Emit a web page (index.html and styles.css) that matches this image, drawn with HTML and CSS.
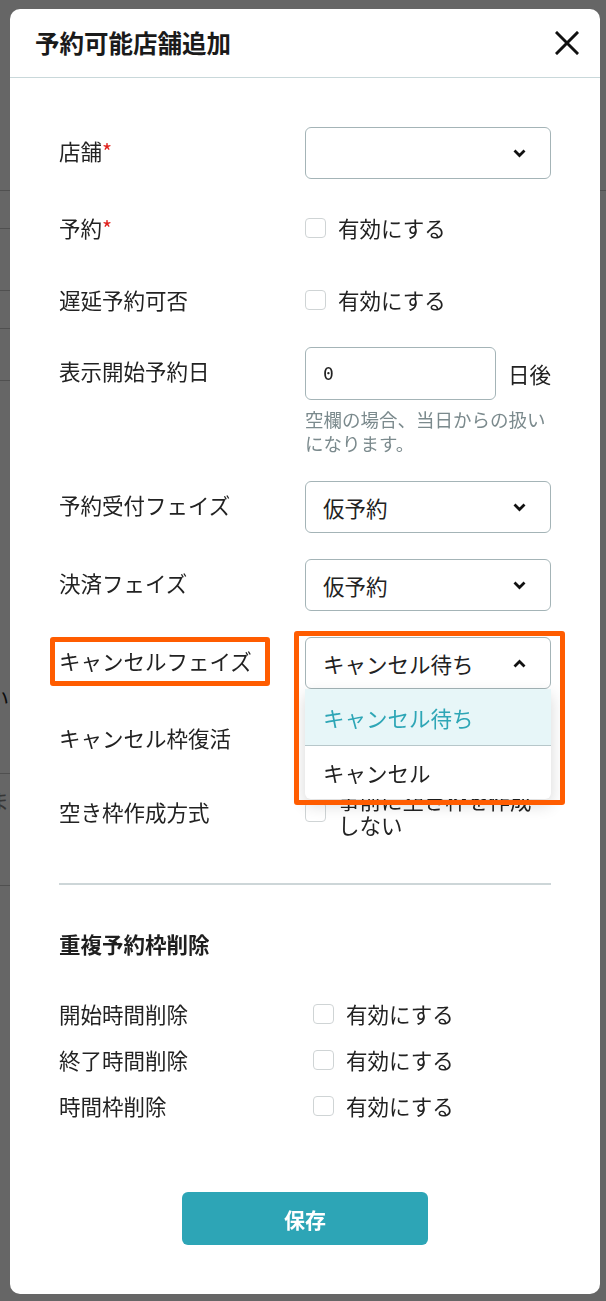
FILE: index.html
```html
<!DOCTYPE html>
<html lang="ja">
<head>
<meta charset="utf-8">
<title>予約可能店舗追加</title>
<link rel="stylesheet" href="styles.css">
</head>
<body>
<div class="bg-page">
  <div class="bg-row bg-row--r1"></div>
  <div class="bg-row bg-row--r2"></div>
  <div class="bg-row bg-row--r3"></div>
  <div class="bg-row bg-row--r4"></div>
  <div class="bg-row bg-row--r5"></div>
  <div class="bg-row bg-row--r6"><span class="bg-clip">ない</span></div>
  <div class="bg-row bg-row--r7"><span class="bg-clip bg-clip--muted">ま</span></div>
</div>

<div class="overlay">
  <div class="modal">
    <header class="modal-header">
      <h1 class="modal-title">予約可能店舗追加</h1>
      <button class="close-btn" type="button" aria-label="閉じる">
        <svg width="24" height="24" viewBox="0 0 24 24"><path d="M2 2 L22 22 M22 2 L2 22" stroke="#111" stroke-width="3" fill="none" stroke-linecap="square"/></svg>
      </button>
    </header>

    <div class="modal-body">
      <div class="field field--select">
        <div class="field-label">店舗<span class="req">*</span></div>
        <div class="select">
          <span class="select-value"></span>
          <svg class="chev" width="13" height="9" viewBox="0 0 13 9"><path d="M1.5 1.5 L6.5 6.5 L11.5 1.5" stroke="#111" stroke-width="2.8" fill="none"/></svg>
        </div>
      </div>

      <div class="field field--check">
        <div class="field-label">予約<span class="req">*</span></div>
        <label class="check"><span class="checkbox"></span><span>有効にする</span></label>
      </div>

      <div class="field field--check">
        <div class="field-label">遅延予約可否</div>
        <label class="check"><span class="checkbox"></span><span>有効にする</span></label>
      </div>

      <div class="field field--date">
        <div class="field-label field-label--date">表示開始予約日</div>
        <div class="date-control">
          <div class="date-row">
            <div class="text-input">0</div>
            <span class="unit">日後</span>
          </div>
          <p class="help">空欄の場合、当日からの扱いになります。</p>
        </div>
      </div>

      <div class="field field--select">
        <div class="field-label">予約受付フェイズ</div>
        <div class="select">
          <span class="select-value">仮予約</span>
          <svg class="chev" width="13" height="9" viewBox="0 0 13 9"><path d="M1.5 1.5 L6.5 6.5 L11.5 1.5" stroke="#111" stroke-width="2.8" fill="none"/></svg>
        </div>
      </div>

      <div class="field field--select">
        <div class="field-label">決済フェイズ</div>
        <div class="select">
          <span class="select-value">仮予約</span>
          <svg class="chev" width="13" height="9" viewBox="0 0 13 9"><path d="M1.5 1.5 L6.5 6.5 L11.5 1.5" stroke="#111" stroke-width="2.8" fill="none"/></svg>
        </div>
      </div>

      <div class="field field--select field--focus">
        <div class="field-label field-label--marked">キャンセルフェイズ<span class="anno anno--label"></span></div>
        <div class="select select--open">
          <span class="select-value">キャンセル待ち</span>
          <svg class="chev" width="13" height="9" viewBox="0 0 13 9"><path d="M1.5 7.5 L6.5 2.5 L11.5 7.5" stroke="#111" stroke-width="2.8" fill="none"/></svg>
          <ul class="dropdown">
            <li class="dropdown-item dropdown-item--active">キャンセル待ち</li>
            <li class="dropdown-item">キャンセル</li>
          </ul>
          <span class="anno anno--select"></span>
        </div>
      </div>

      <div class="field field--check">
        <div class="field-label">キャンセル枠復活</div>
        <label class="check"><span class="checkbox"></span><span>有効にする</span></label>
      </div>

      <div class="field field--check">
        <div class="field-label">空き枠作成方式</div>
        <label class="check"><span class="checkbox"></span><span class="check-text--wrap">事前に空き枠を作成しない</span></label>
      </div>

      <hr class="divider">

      <h2 class="section-title">重複予約枠削除</h2>

      <div class="opt-list">
        <div class="opt-row">
          <div class="field-label">開始時間削除</div>
          <label class="check"><span class="checkbox"></span><span>有効にする</span></label>
        </div>
        <div class="opt-row">
          <div class="field-label">終了時間削除</div>
          <label class="check"><span class="checkbox"></span><span>有効にする</span></label>
        </div>
        <div class="opt-row">
          <div class="field-label">時間枠削除</div>
          <label class="check"><span class="checkbox"></span><span>有効にする</span></label>
        </div>
      </div>

      <button class="save-btn" type="button">保存</button>
    </div>
  </div>
</div>
</body>
</html>
```

FILE: styles.css
```css
* { box-sizing: border-box; }

html, body { margin: 0; padding: 0; }

body {
  width: 606px;
  height: 1301px;
  overflow: hidden;
  background: #fff;
  color: #222;
  font-family: "Noto Sans CJK JP", "Noto Sans", sans-serif;
}

/* ---------- page behind the dialog ---------- */
.bg-page { width: 600px; }
.bg-row { border-bottom: 1px solid #c8c8c8; }
.bg-row--r1 { height: 191px; width: 606px; }
.bg-row--r2 { height: 38px; }
.bg-row--r3 { height: 62px; }
.bg-row--r4 { height: 38px; }
.bg-row--r5 { height: 52px; }
.bg-row--r6 { height: 393px; padding-top: 301px; }
.bg-row--r7 { height: 112px; padding-top: 11px; }
.bg-clip {
  display: block;
  margin-left: -33px;
  font-size: 21px;
  line-height: 30px;
  color: #222;
}
.bg-clip--muted { margin-left: -12px; color: #888; }

/* ---------- overlay + modal ---------- */
.overlay {
  position: fixed;
  inset: 0;
  background: rgba(0, 0, 0, 0.6);
  padding: 9px 6px 7px 10px;
}

.modal {
  height: 100%;
  background: #fff;
  border-radius: 10px;
  display: flex;
  flex-direction: column;
}

.modal-header {
  height: 69px;
  flex: none;
  border-bottom: 1px solid #c9d8da;
  display: flex;
  align-items: center;
  justify-content: space-between;
  padding: 0 21px 0 25px;
}

.modal-title {
  margin: 0;
  font-size: 24.5px;
  font-weight: 700;
  line-height: 1;
  color: #1a1a1a;
}

.close-btn {
  width: 24px;
  height: 24px;
  padding: 0;
  border: 0;
  background: none;
  display: flex;
}

.modal-body {
  flex: 1;
  padding: 49px 49px 49px;
  display: flex;
  flex-direction: column;
}

/* ---------- form rows ---------- */
.field {
  display: grid;
  grid-template-columns: 246px 246px;
  align-items: center;
  margin-bottom: 26px;
  position: relative;
}
.field--check { min-height: 46px; }
.field--date { align-items: start; margin-top: -2px; }
.field--select .field-label { padding-bottom: 4px; }

.field-label {
  font-size: 21.5px;
  line-height: 30px;
  color: #222;
}
.field-label--date { padding-top: 9px; }
.field--select .field-label--marked {
  position: relative;
  align-self: stretch;
  display: flex;
  align-items: center;
}

.req { color: #e0201c; }

.select {
  position: relative;
  height: 52px;
  border: 1px solid #a4b4b7;
  border-radius: 6px;
  background: #fff;
  display: flex;
  align-items: center;
  justify-content: space-between;
  padding: 0 24px 0 17px;
  font-size: 21.5px;
  color: #222;
}
.chev { flex: none; }

.check {
  display: flex;
  align-items: center;
  gap: 12px;
  font-size: 21.5px;
  line-height: 30px;
  color: #222;
}
.checkbox {
  flex: none;
  width: 21px;
  height: 20px;
  border: 1.5px solid #cfd4d5;
  border-radius: 4px;
  background: #fff;
}
.check-text--wrap {
  max-width: 202px;
  line-height: 25px;
}

.date-control { display: flex; flex-direction: column; }
.date-row {
  display: flex;
  align-items: center;
  gap: 12px;
  font-size: 21.5px;
}
.text-input {
  flex: 1;
  min-width: 0;
  height: 53px;
  border: 1px solid #a4b4b7;
  border-radius: 6px;
  padding: 0 17px;
  display: flex;
  align-items: center;
  font-family: "DejaVu Sans Mono", monospace;
  font-size: 18px;
  color: #222;
}
.unit { flex: none; white-space: nowrap; line-height: 30px; }
.help {
  margin: 7px 0 0;
  font-size: 18.5px;
  line-height: 24px;
  color: #7b8a8d;
}

/* ---------- open dropdown ---------- */
.dropdown {
  position: absolute;
  top: 100%;
  left: -1px;
  right: -1px;
  margin: 1px 0 0;
  padding: 0;
  list-style: none;
  background: #fff;
  border-radius: 0 0 6px 6px;
  box-shadow: 0 6px 16px rgba(0, 0, 0, 0.16);
  overflow: hidden;
  z-index: 2;
}
.dropdown-item {
  height: 53px;
  display: flex;
  align-items: center;
  padding-left: 18px;
  font-size: 21.5px;
  color: #222;
}
.dropdown-item--active {
  height: 57px;
  background: #e7f6f8;
  color: #2ea6b6;
  border-bottom: 1px solid #b7c7ca;
}

/* ---------- annotation boxes ---------- */
.anno {
  position: absolute;
  border: 5px solid #ff5c00;
  border-radius: 3px;
  pointer-events: none;
  z-index: 3;
}
.anno--label { left: -9px; top: 0; width: 220px; height: 49px; }
.anno--select { left: -12px; top: -7px; width: 271px; height: 174px; }

/* ---------- second section ---------- */
.divider {
  margin: 20px 0 0;
  border: 0;
  border-top: 2px solid #cdd6d8;
  height: 0;
}

.section-title {
  margin: 44px 0 0;
  font-size: 21.5px;
  font-weight: 700;
  line-height: 30px;
  color: #1f1f1f;
}

.opt-list { margin-top: 32px; }
.opt-row {
  display: grid;
  grid-template-columns: 254px 1fr;
  align-items: center;
  height: 46px;
}

.save-btn {
  margin: 63px auto 0;
  width: 246px;
  height: 53px;
  border: 0;
  border-radius: 6px;
  background: #2da5b6;
  color: #fff;
  font-family: "Noto Sans CJK JP", sans-serif;
  font-size: 21px;
  font-weight: 700;
}
```
